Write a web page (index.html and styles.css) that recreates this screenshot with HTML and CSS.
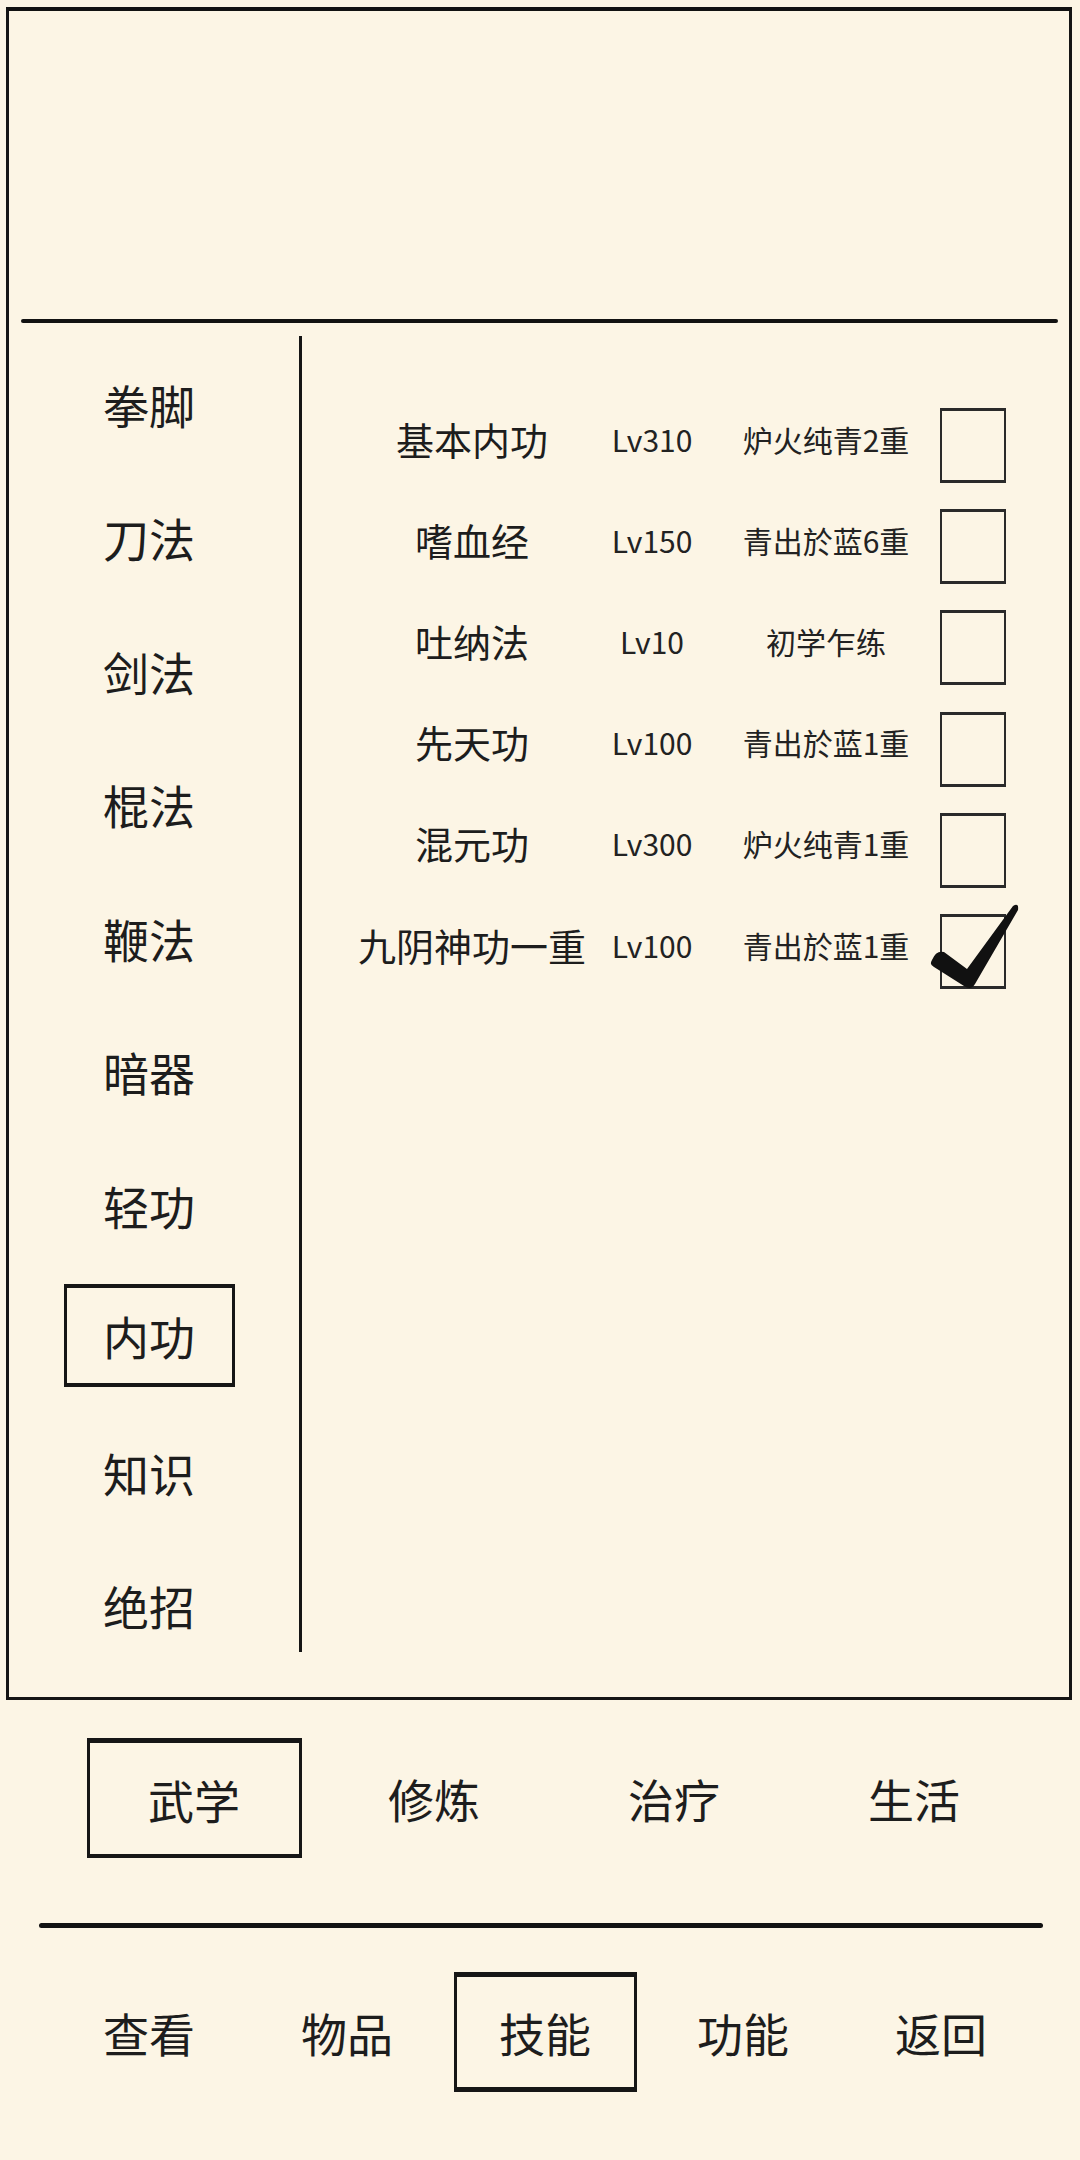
FILE: index.html
```html
<!DOCTYPE html>
<html lang="zh-CN">
<head>
<meta charset="utf-8">
<title>技能</title>
<link rel="stylesheet" href="styles.css">
</head>
<body>
<div class="frame">
  <div class="top-area"></div>
  <div class="hdivider"></div>
  <div class="content">
    <div class="menu">
      <div class="menu-item"><span class="label">拳脚</span></div>
      <div class="menu-item"><span class="label">刀法</span></div>
      <div class="menu-item"><span class="label">剑法</span></div>
      <div class="menu-item"><span class="label">棍法</span></div>
      <div class="menu-item"><span class="label">鞭法</span></div>
      <div class="menu-item"><span class="label">暗器</span></div>
      <div class="menu-item"><span class="label">轻功</span></div>
      <div class="menu-item"><span class="label selected">内功</span></div>
      <div class="menu-item"><span class="label">知识</span></div>
      <div class="menu-item"><span class="label">绝招</span></div>
    </div>
    <div class="vline"></div>
    <div class="list">
      <div class="row">
        <span class="name">基本内功</span><span class="lv">Lv310</span><span class="realm">炉火纯青2重</span><span class="box"></span>
      </div>
      <div class="row">
        <span class="name">嗜血经</span><span class="lv">Lv150</span><span class="realm">青出於蓝6重</span><span class="box"></span>
      </div>
      <div class="row">
        <span class="name">吐纳法</span><span class="lv">Lv10</span><span class="realm">初学乍练</span><span class="box"></span>
      </div>
      <div class="row">
        <span class="name">先天功</span><span class="lv">Lv100</span><span class="realm">青出於蓝1重</span><span class="box"></span>
      </div>
      <div class="row">
        <span class="name">混元功</span><span class="lv">Lv300</span><span class="realm">炉火纯青1重</span><span class="box"></span>
      </div>
      <div class="row">
        <span class="name">九阴神功一重</span><span class="lv">Lv100</span><span class="realm">青出於蓝1重</span><span class="box checked"><svg class="check" viewBox="0 0 100 100" width="100" height="100"><path d="M5 62 Q9 52 17 54 L40 71 L86 8 Q92 4 91 12 L48 86 Q44 93 37 88 L7 69 Q2 67 5 62 Z" fill="#111"/></svg></span>
      </div>
    </div>
  </div>
</div>

<div class="tabs">
  <div class="tab"><span class="tab-label selected">武学</span></div>
  <div class="tab"><span class="tab-label">修炼</span></div>
  <div class="tab"><span class="tab-label">治疗</span></div>
  <div class="tab"><span class="tab-label">生活</span></div>
</div>

<div class="separator"></div>

<div class="nav">
  <div class="nav-item"><span class="nav-label">查看</span></div>
  <div class="nav-item"><span class="nav-label">物品</span></div>
  <div class="nav-item"><span class="nav-label selected">技能</span></div>
  <div class="nav-item"><span class="nav-label">功能</span></div>
  <div class="nav-item"><span class="nav-label">返回</span></div>
</div>
</body>
</html>
```

FILE: styles.css
```css
* {
  box-sizing: border-box;
}

html, body {
  margin: 0;
  padding: 0;
  background: #fcf5e5;
}

body {
  width: 1080px;
  height: 2160px;
  overflow: hidden;
  font-family: "Noto Sans CJK SC", "Noto Sans", sans-serif;
  color: #1d1d1d;
}

.frame {
  margin: 7px 8px 0 6px;
  height: 1693px;
  border: 3px solid #151515;
  border-top: 4px solid #111;
  display: flex;
  flex-direction: column;
}

.top-area {
  height: 308px;
  flex: none;
}

.hdivider {
  height: 4px;
  margin: 0 11px 0 12px;
  background: #121212;
  border-radius: 2px;
  flex: none;
}

.content {
  flex: 1;
  display: flex;
}

.menu {
  width: 280px;
  padding-top: 14px;
  display: flex;
  flex-direction: column;
}

.menu-item {
  height: 133.5px;
  display: flex;
  align-items: center;
  justify-content: center;
}

.label {
  font-size: 46px;
  line-height: 1;
  display: flex;
  align-items: center;
  justify-content: center;
}

.label.selected {
  width: 171px;
  height: 103px;
  margin-bottom: 6px;
  border: 3px solid #161616;
  border-top-width: 4px;
  border-bottom-width: 4px;
}

.vline {
  width: 3px;
  margin-left: 10px;
  margin-top: 13px;
  height: 1316px;
  background: #151515;
}

.list {
  padding-top: 72px;
  padding-left: 50px;
  display: flex;
  flex-direction: column;
}

.row {
  height: 101.2px;
  display: grid;
  grid-template-columns: 240px 120px 228px 66px;
  align-items: center;
}

.name {
  font-size: 38px;
  line-height: 1;
  text-align: center;
  white-space: nowrap;
  margin-bottom: 14px;
}

.lv {
  font-size: 30px;
  line-height: 1;
  text-align: center;
  margin-bottom: 14px;
  color: #222;
}

.realm {
  font-size: 30px;
  line-height: 1;
  text-align: center;
  white-space: nowrap;
  margin-bottom: 14px;
  color: #222;
}

.box {
  position: relative;
  width: 66px;
  height: 75px;
  border: 2px solid #2a2a2a;
  border-top-width: 3px;
  border-bottom-width: 3px;
}

.check {
  position: absolute;
  left: -15px;
  top: -19px;
  width: 100px;
  height: 100px;
}

.tabs {
  margin-top: 38px;
  padding-left: 74px;
  display: grid;
  grid-template-columns: repeat(4, 240px);
  height: 120px;
}

.tab {
  display: flex;
  align-items: center;
  justify-content: center;
}

.tab-label {
  font-size: 46px;
  line-height: 1;
  display: flex;
  align-items: center;
  justify-content: center;
}

.tab-label.selected {
  width: 215px;
  height: 120px;
  border: 3px solid #161616;
  border-top-width: 5px;
  border-bottom-width: 4px;
}

.separator {
  margin: 65px 0 0 39px;
  width: 1004px;
  height: 5px;
  background: #121212;
  border-radius: 3px;
}

.nav {
  margin-top: 44px;
  padding-left: 50px;
  display: grid;
  grid-template-columns: repeat(5, 198px);
  height: 120px;
}

.nav-item {
  display: flex;
  align-items: center;
  justify-content: center;
}

.nav-label {
  font-size: 46px;
  line-height: 1;
  display: flex;
  align-items: center;
  justify-content: center;
}

.nav-label.selected {
  width: 183px;
  height: 120px;
  border: 3px solid #161616;
  border-top-width: 5px;
  border-bottom-width: 5px;
}
```
